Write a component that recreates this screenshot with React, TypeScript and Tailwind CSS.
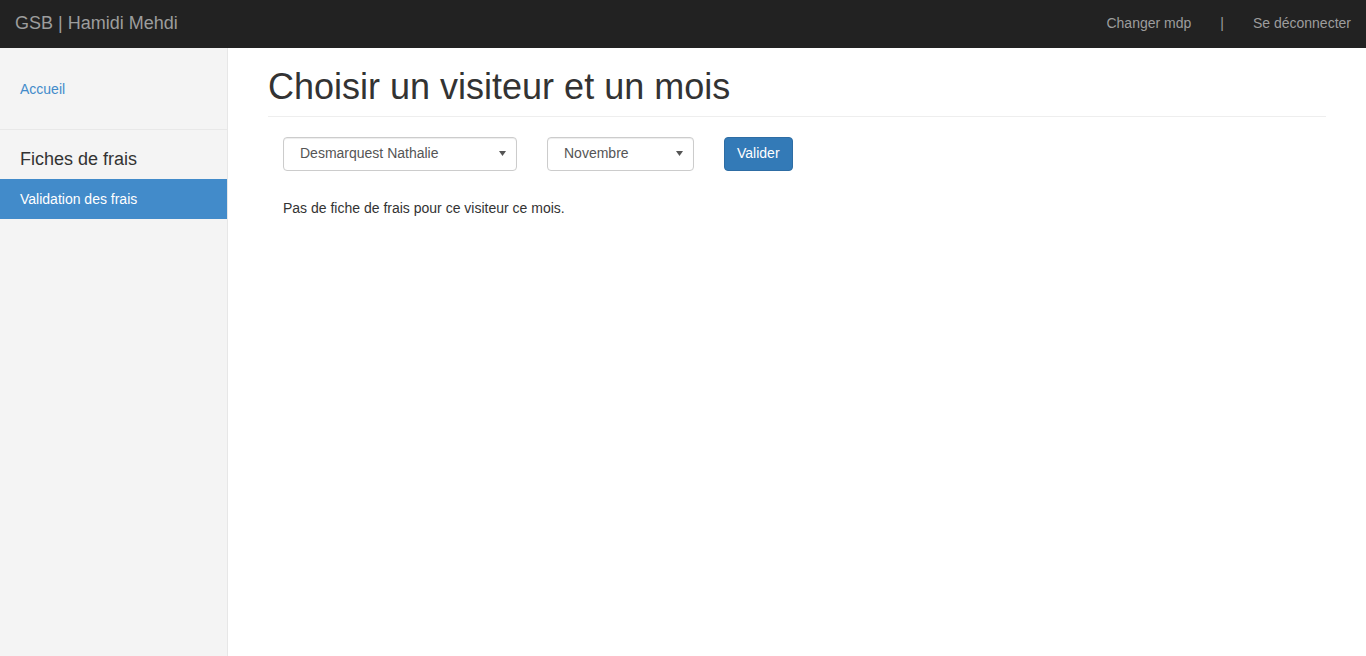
import React from 'react';

const font = { fontFamily: '"Liberation Sans", Arial, sans-serif' };

function Caret() {
  return (
    <svg width="7" height="5" viewBox="0 0 7 5" className="shrink-0">
      <polygon points="0,0 7,0 3.5,5" fill="#555" />
    </svg>
  );
}

function FakeSelect({ value, width }: { value: string; width: string }) {
  return (
    <div
      className={`${width} h-[34px] flex items-center justify-between pl-[16px] pr-[10px] border border-[#ccc] rounded-[4px] bg-white text-[14px] text-[#555] shadow-[inset_0_1px_1px_rgba(0,0,0,0.075)]`}
    >
      <span>{value}</span>
      <Caret />
    </div>
  );
}

export default function App() {
  return (
    <div className="min-h-[656px] h-screen flex flex-col bg-white text-[#333]" style={font}>
      {/* Navbar */}
      <nav className="h-12 shrink-0 bg-[#222] flex items-center justify-between pb-[2px]">
        <span className="pl-[15px] text-[18px] text-[#9d9d9d]">GSB | Hamidi Mehdi</span>
        <div className="flex items-center text-[14px] text-[#9d9d9d]">
          <span className="px-[15px]">Changer mdp</span>
          <span className="px-[14px]">|</span>
          <span className="px-[15px]">Se déconnecter</span>
        </div>
      </nav>

      <div className="flex flex-1">
        {/* Sidebar */}
        <aside className="w-[228px] shrink-0 bg-[#f4f4f4] border-r border-[#e7e7e7]">
          <div className="pt-[31px] pb-[30px] border-b border-[#e8e8e8]">
            <span className="block px-5 text-[14px] leading-[20px] text-[#428bca]">Accueil</span>
          </div>
          <div className="pt-[17px]">
            <h3 className="px-5 text-[18px] leading-[24px] text-[#333] mb-[8px]">Fiches de frais</h3>
            <div className="h-10 flex items-center px-5 bg-[#428bca] text-white text-[14px]">
              Validation des frais
            </div>
          </div>
        </aside>

        {/* Main */}
        <main className="flex-1 px-10">
          <div className="pt-[19px] pb-[9px] border-b border-[#eee]">
            <h1 className="text-[36px] leading-[39.6px] text-[#333]">Choisir un visiteur et un mois</h1>
          </div>
          <div className="flex items-center mt-5 pl-[15px]">
            <FakeSelect value="Desmarquest Nathalie" width="w-[234px]" />
            <div className="w-[30px]" />
            <FakeSelect value="Novembre" width="w-[147px]" />
            <div className="w-[30px]" />
            <button className="h-[34px] px-3 rounded-[4px] bg-[#337ab7] border border-[#2e6da4] text-white text-[14px]">
              Valider
            </button>
          </div>
          <p className="mt-[27px] pl-[15px] text-[14px] leading-[20px] text-[#333]">
            Pas de fiche de frais pour ce visiteur ce mois.
          </p>
        </main>
      </div>
    </div>
  );
}
